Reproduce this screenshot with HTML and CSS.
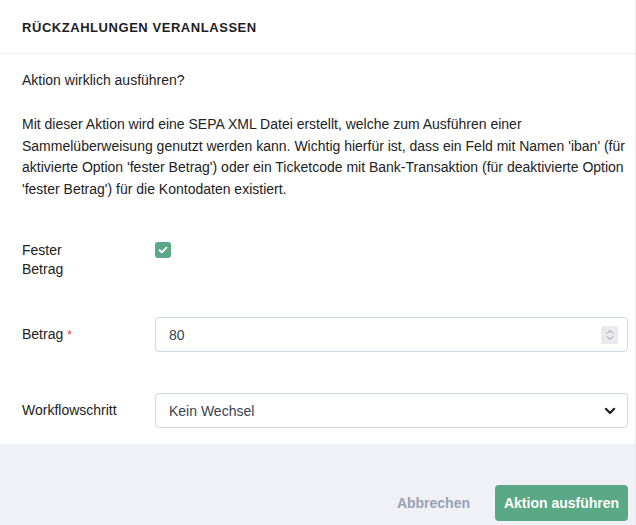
FILE: index.html
```html
<!DOCTYPE html>
<html lang="de">
<head>
    <meta charset="UTF-8">
    <title>Rückzahlungen veranlassen</title>
    <link rel="stylesheet" href="styles.css">
</head>
<body>

<div class="dialog">
    <header class="dialog-head">
        <h2>Rückzahlungen veranlassen</h2>
    </header>

    <div class="dialog-body">
        <p class="question">Aktion wirklich ausführen?</p>
        <p class="info">Mit dieser Aktion wird eine SEPA XML Datei erstellt, welche zum Ausführen einer Sammelüberweisung genutzt werden kann. Wichtig hierfür ist, dass ein Feld mit Namen 'iban' (für aktivierte Option 'fester Betrag') oder ein Ticketcode mit Bank-Transaktion (für deaktivierte Option 'fester Betrag') für die Kontodaten existiert.</p>

        <div class="form-row row-check">
            <label class="label">Fester Betrag</label>
            <div class="field">
                <span class="checkbox">
                    <svg width="10" height="8" viewBox="0 0 10 8"><path d="M1.6 4.2 L3.9 6.3 L8.4 1.7" fill="none" stroke="#fff" stroke-width="1.9" stroke-linecap="round" stroke-linejoin="round"/></svg>
                </span>
            </div>
        </div>

        <div class="form-row row-amount">
            <label class="label">Betrag <span class="req">*</span></label>
            <div class="field">
                <div class="input">
                    <span>80</span>
                    <span class="spinner">
                        <svg width="8" height="12" viewBox="0 0 8 12"><path d="M1 4.5 L4 1.5 L7 4.5 M1 7.5 L4 10.5 L7 7.5" fill="none" stroke="#8a8f98" stroke-width="1"/></svg>
                    </span>
                </div>
            </div>
        </div>

        <div class="form-row row-step">
            <label class="label">Workflowschritt</label>
            <div class="field">
                <div class="input">
                    <span>Kein Wechsel</span>
                    <svg width="12" height="8" viewBox="0 0 12 8"><path d="M1.8 1.8 L6 6 L10.2 1.8" fill="none" stroke="#1f2328" stroke-width="2.2" stroke-linecap="round" stroke-linejoin="round"/></svg>
                </div>
            </div>
        </div>
    </div>

    <footer class="dialog-foot">
        <button class="btn-link">Abbrechen</button>
        <button class="btn-primary">Aktion ausführen</button>
    </footer>
</div>

</body>
</html>
```

FILE: styles.css
```css
* {
    margin: 0;
    padding: 0;
    box-sizing: border-box;
}
body {
    font-family: 'Liberation Sans', Arial, sans-serif;
    font-size: 14px;
    color: #222;
    background: #fff;
}
.dialog {
    width: 636px;
    height: 525px;
    display: flex;
    flex-direction: column;
    border-right: 1px solid #e8eaef;
}
/* Header */
.dialog-head {
    height: 54px;
    padding: 0 22px;
    display: flex;
    align-items: center;
    border-bottom: 1px solid #eceef3;
}
.dialog-head h2 {
    font-size: 13px;
    font-weight: bold;
    text-transform: uppercase;
    letter-spacing: 0.55px;
    color: #1d1d1f;
    margin-top: 1px;
}
/* Body */
.dialog-body {
    flex: 1;
    padding: 16px 7px 0 22px;
}
.question {
    line-height: 20px;
}
.info {
    margin-top: 24px;
    line-height: 21.6px;
}
.form-row {
    display: flex;
    align-items: center;
}
.row-check {
    align-items: flex-start;
    margin-top: 41px;
}
.row-amount {
    margin-top: 38px;
}
.row-step {
    margin-top: 41px;
}
.label {
    width: 133px;
    padding-right: 60px;
    line-height: 19px;
    flex-shrink: 0;
}
.req {
    color: #e53935;
    font-size: 12px;
}
.field {
    flex: 1;
}
.checkbox {
    display: flex;
    align-items: center;
    justify-content: center;
    width: 16px;
    height: 16px;
    margin-top: 1px;
    border-radius: 3px;
    background: #5aa885;
}
.input {
    height: 35px;
    border: 1px solid #cfd5de;
    border-radius: 4px;
    padding: 0 11px 0 13px;
    display: flex;
    align-items: center;
    justify-content: space-between;
    color: #3a4250;
}
.spinner {
    display: flex;
    align-items: center;
    justify-content: center;
    width: 17px;
    height: 18px;
    background: #e9eaee;
    border-radius: 2px;
    margin-right: -2px;
}
/* Footer */
.dialog-foot {
    height: 81px;
    background: #eff1f6;
    display: flex;
    justify-content: flex-end;
    align-items: flex-end;
    padding: 0 7px 4px 0;
    gap: 25px;
}
.btn-link {
    border: none;
    background: none;
    font-family: inherit;
    font-size: 14px;
    font-weight: bold;
    color: #98a2b5;
    height: 36px;
}
.btn-primary {
    border: none;
    background: #5aa885;
    color: #fff;
    font-family: inherit;
    font-size: 14px;
    font-weight: bold;
    height: 36px;
    width: 133px;
    border-radius: 4px;
}
```
